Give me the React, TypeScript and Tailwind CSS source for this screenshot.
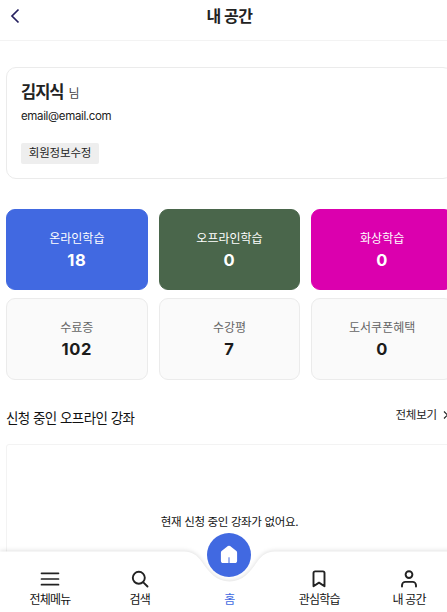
import type { ReactNode } from 'react';

interface Stat {
  label: string;
  value: number;
  boxClass: string;
  labelClass: string;
}

const stats: Stat[] = [
  { label: '온라인학습', value: 18, boxClass: 'bg-[#4169e1] border-[#4169e1] text-white', labelClass: 'text-white' },
  { label: '오프라인학습', value: 0, boxClass: 'bg-[#4a664b] border-[#4a664b] text-white', labelClass: 'text-white' },
  { label: '화상학습', value: 0, boxClass: 'bg-[#db00ae] border-[#db00ae] text-white', labelClass: 'text-white' },
  { label: '수료증', value: 102, boxClass: 'bg-[#fafafa] border-[#ebebeb] text-[#1b1b1b]', labelClass: 'text-[#666]' },
  { label: '수강평', value: 7, boxClass: 'bg-[#fafafa] border-[#ebebeb] text-[#1b1b1b]', labelClass: 'text-[#666]' },
  { label: '도서쿠폰혜택', value: 0, boxClass: 'bg-[#fafafa] border-[#ebebeb] text-[#1b1b1b]', labelClass: 'text-[#666]' },
];

interface NavItemProps {
  label: string;
  active?: boolean;
  children?: ReactNode;
}

function NavItem({ label, active, children }: NavItemProps) {
  return (
    <a href="#" className="flex flex-1 flex-col items-center">
      <span className="flex h-5 items-center justify-center text-[#222]">{children}</span>
      <span
        className={`mt-[3px] text-[12px] leading-4 tracking-[-0.8px] whitespace-nowrap ${
          active ? 'text-[#4169e1]' : 'text-[#111]'
        }`}
      >
        {label}
      </span>
    </a>
  );
}

function BottomNav() {
  return (
    <nav className="absolute inset-x-0 bottom-0 h-[61px] px-[5px]">
      {/* Bar with the notch under the home button */}
      <svg
        className="absolute -top-2 left-0 h-[69px] w-[459px] drop-shadow-[0_-1px_2px_rgba(0,0,0,0.12)]"
        viewBox="0 0 459 69"
        fill="none"
      >
        <path
          d="M0 8.500H184C192 8.500 197 12 202 19C209 29 216 38.500 229.500 38.500C243 38.500 250 29 257 19C262 12 267 8.500 275 8.500H459V69H0Z"
          fill="#fff"
        />
      </svg>
      <div className="absolute -top-[18px] left-[207px] flex size-11 items-center justify-center rounded-full bg-[#4169e1]">
        <svg className="-mt-[2px] h-[19px] w-[18px]" viewBox="0 0 18 19" fill="none">
          <path
            d="M7.900 1.100a1.800 1.800 0 0 1 2.200 0l6 4.700c.7.500 1 1.100 1 1.900v8.300c0 1.200-.9 2.100-2.100 2.100H3c-1.200 0-2.100-.9-2.100-2.100V7.700c0-.8.300-1.400 1-1.900z"
            fill="#fff"
          />
          <path d="M9 12.300v6" stroke="#4169e1" strokeWidth="1" />
        </svg>
      </div>
      <div className="relative flex pt-[18px]">
        <NavItem label="전체메뉴">
          <svg className="h-[14px] w-5" viewBox="0 0 20 14" stroke="currentColor" strokeWidth="1.700" strokeLinecap="round">
            <path d="M1.500 1.300h17M1.500 7h17M1.500 12.700h17" />
          </svg>
        </NavItem>
        <NavItem label="검색">
          <svg className="size-[18px]" viewBox="0 0 18 18" fill="none" stroke="currentColor" strokeWidth="1.900" strokeLinecap="round">
            <circle cx="7.800" cy="7.800" r="6" />
            <path d="M12.300 12.300l4.200 4.200" />
          </svg>
        </NavItem>
        <NavItem label="홈" active />
        <NavItem label="관심학습">
          <svg className="h-[18px] w-[14px]" viewBox="0 0 14 18" fill="none" stroke="currentColor" strokeWidth="1.900" strokeLinejoin="round">
            <path d="M1.500 3c0-1 .6-1.600 1.600-1.600h7.800c1 0 1.600.6 1.600 1.600v13.300L7 12.600l-5.500 3.700z" />
          </svg>
        </NavItem>
        <NavItem label="내 공간">
          <svg className="size-[18px]" viewBox="0 0 18 18" fill="none" stroke="currentColor" strokeWidth="1.900" strokeLinecap="round">
            <circle cx="9" cy="4.600" r="3.400" />
            <path d="M2 16.600v-1.300a3.400 3.400 0 0 1 3.400-3.400h7.200a3.400 3.400 0 0 1 3.400 3.400v1.300" />
          </svg>
        </NavItem>
      </div>
    </nav>
  );
}

export default function App() {
  return (
    <div className="h-[612px] w-full overflow-hidden bg-white font-['Inter','Noto_Sans_CJK_KR',sans-serif] text-[#222]">
      <div className="relative h-full w-[459px] overflow-hidden">
        {/* Header */}
        <header className="relative flex h-[41px] items-center justify-center border-b border-[#f3f3f3] pb-[9px]">
          <button className="absolute top-[8px] left-[9px]" aria-label="뒤로">
            <svg className="h-4 w-3" viewBox="0 0 12 16" fill="none" stroke="#25205f" strokeWidth="1.700">
              <path d="M9.500 1.500L3 8l6.500 6.500" />
            </svg>
          </button>
          <h1 className="text-[16px] leading-6 font-bold tracking-[-0.5px]">내 공간</h1>
        </header>

        <main className="px-[6px] pt-[26px]">
          {/* Profile */}
          <section className="h-[112px] rounded-[10px] border border-[#ebebeb] px-[14px] pt-3">
            <p className="flex items-baseline gap-[5px] leading-6">
              <strong className="text-[16.500px] font-bold tracking-[-1px]">김지식</strong>
              <span className="text-[12px] text-[#444]">님</span>
            </p>
            <p className="text-[11.500px] leading-5 tracking-[-0.350px]">email@email.com</p>
            <button className="mt-[17px] flex h-[21px] w-[78px] items-center justify-center rounded-[2px] bg-[#eee] pt-px text-[11.500px] tracking-[-0.2px]">
              회원정보수정
            </button>
          </section>

          {/* Learning stats */}
          <section className="mt-[29.600px] grid grid-cols-3 gap-x-[11px] gap-y-[7.600px]">
            {stats.map((stat) => (
              <div
                key={stat.label}
                className={`flex h-[81.800px] flex-col items-center rounded-[9px] border pt-[19px] ${stat.boxClass}`}
              >
                <span className={`text-[12px] leading-5 ${stat.labelClass}`}>{stat.label}</span>
                <strong className="text-[16.500px] leading-[22px] font-bold tracking-[0.700px]">{stat.value}</strong>
              </div>
            ))}
          </section>

          {/* Offline courses */}
          <section className="mt-[26.200px]">
            <div className="flex h-[38px] items-start justify-between">
              <h2 className="text-[13.500px] leading-6 tracking-[-0.550px] text-[#111]">신청 중인 오프라인 강좌</h2>
              <a href="#" className="flex items-center gap-[6px] text-[11.500px] leading-[18px] tracking-[-0.2px]">
                전체보기
                <svg className="h-2 w-[10px]" viewBox="0 0 10 8" fill="none" stroke="currentColor" strokeWidth="1.200">
                  <path d="M1 .5L4.500 4 1 7.500" />
                </svg>
              </a>
            </div>
            <div className="flex h-[158px] items-center justify-center rounded-[3px] border border-[#f3f3f3] text-[11.500px] tracking-[-0.350px] text-[#111]">
              현재 신청 중인 강좌가 없어요.
            </div>
          </section>
        </main>

        <BottomNav />
      </div>
    </div>
  );
}
